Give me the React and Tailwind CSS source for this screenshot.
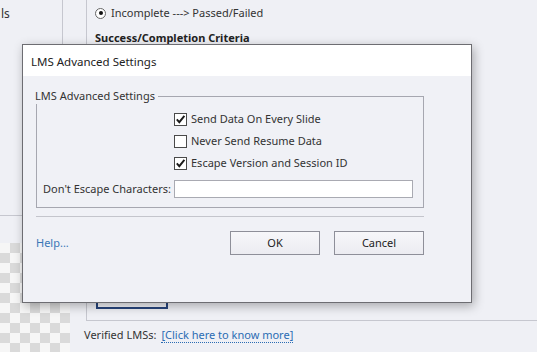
import React from 'react';

const Check = ({ checked, label }) => (
  <label className="flex h-[22px] items-center gap-[4px]">
    <span className="flex h-[13px] w-[13px] items-center justify-center border border-[#4a4a4a] bg-white">
      {checked && (
        <svg width="11" height="11" viewBox="0 0 11 11">
          <path d="M1.8 5.4 L4.3 8.2 L9.4 1.8" fill="none" stroke="#1a1a1a" strokeWidth="1.9" />
        </svg>
      )}
    </span>
    <span>{label}</span>
  </label>
);

const Btn = ({ children }) => (
  <button className="h-[24px] w-[90px] border border-[#8e8f99] bg-gradient-to-b from-[#f7f7fa] to-[#ececf1] text-[#222]">
    {children}
  </button>
);

export default function App() {
  return (
    <div
      className="relative h-[352px] w-[537px] overflow-hidden whitespace-nowrap bg-[#eff0f5] text-[11px] text-[#333]"
      style={{ fontFamily: '"Noto Sans", "Open Sans", sans-serif' }}
    >
      {/* page behind the dialog */}
      <div className="flex h-full">
        <div className="flex w-[86px] shrink-0 flex-col">
          <div className="h-[216px] w-[63px] border-r border-b border-[#c6c7cf] pt-[5px] pl-[1px] text-[12px]">ls</div>
          <div className="mt-[27px] h-[109px] w-[70px] bg-[repeating-conic-gradient(#dadada_0_25%,#f6f6f6_0_50%)] bg-[length:20px_20px]" />
        </div>
        <div className="flex flex-1 flex-col">
          <div className="flex h-[321px] flex-col border-l border-b border-[#c6c7cf] pl-[8px]">
            <div className="mt-[6px] flex h-[14px] items-center gap-[5px]">
              <span className="flex h-[11px] w-[11px] items-center justify-center rounded-full border border-[#666] bg-white">
                <span className="h-[4px] w-[4px] rounded-full bg-[#111]" />
              </span>
              <span>Incomplete ---&gt; Passed/Failed</span>
            </div>
            <div className="mt-[10px] font-bold text-[#222]">Success/Completion Criteria</div>
            <div className="flex-1" />
            <button className="mb-[11px] ml-[1px] h-[22px] w-[72px] border-2 border-[#27457c] bg-[#f3f4f8] text-[#222]">
              Advanced
            </button>
          </div>
          <div className="-ml-[2px] mt-[6px] flex items-center gap-[5px]">
            <span>Verified LMSs:</span>
            <a className="border-b border-dotted border-[#2b6cb3] leading-[14px] text-[#2b6cb3]">
              [Click here to know more]
            </a>
          </div>
        </div>
      </div>

      {/* modal dialog */}
      <div className="absolute left-[22px] top-[44px] flex h-[259px] w-[450px] flex-col border border-[#6d6d72] bg-[#f0f1f6] shadow-[2px_3px_10px_rgba(0,0,0,0.3)]">
        <div className="flex h-[31px] items-center bg-white pl-[8px] pt-[2px] text-[11.5px] text-[#222]">LMS Advanced Settings</div>
        <div className="flex w-[401px] flex-col pl-[13px] pt-[20px]">
          <div className="relative border border-[#a6a7b0] pb-[9px] pt-[11px]">
            <span className="absolute -left-[2px] -top-[9px] bg-[#f0f1f6] pr-[3px] leading-[16px]">
              LMS Advanced Settings
            </span>
            <div className="flex flex-col pl-[137px]">
              <Check checked label="Send Data On Every Slide" />
              <Check label="Never Send Resume Data" />
              <Check checked label="Escape Version and Session ID" />
            </div>
            <div className="mt-[6px] flex h-[18px] items-center">
              <span className="w-[137px] pr-[3px] text-right">Don&apos;t Escape Characters:</span>
              <span className="h-[18px] w-[239px] border border-[#a9aab2] bg-white" />
            </div>
          </div>
          <div className="mt-[8px] h-[1px] bg-[#c4c5cc]" />
          <div className="mt-[14px] flex items-center">
            <a className="flex-1 text-[#3a77b6]">Help...</a>
            <Btn>OK</Btn>
            <div className="w-[14px]" />
            <Btn>Cancel</Btn>
          </div>
        </div>
      </div>
    </div>
  );
}
